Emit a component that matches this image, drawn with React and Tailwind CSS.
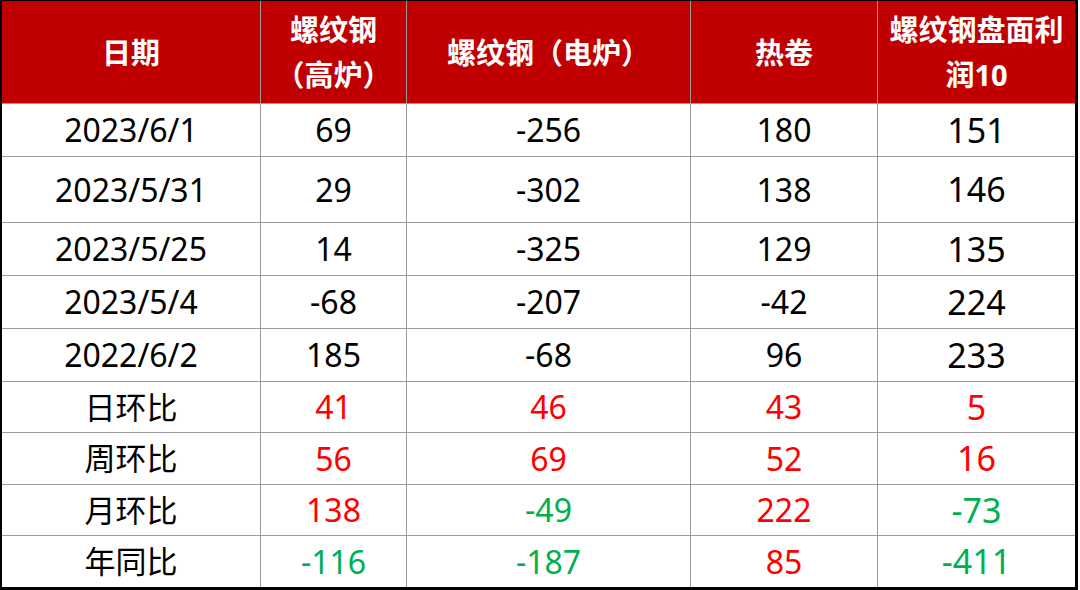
import React from 'react';

const headers = [
  ['日期'],
  ['螺纹钢', '（高炉）'],
  ['螺纹钢（电炉）'],
  ['热卷'],
  ['螺纹钢盘面利', '润10'],
];

// value colour: k = black, r = red, g = green
const rows = [
  ['2023/6/1', ['69', 'k'], ['-256', 'k'], ['180', 'k'], ['151', 'k']],
  ['2023/5/31', ['29', 'k'], ['-302', 'k'], ['138', 'k'], ['146', 'k']],
  ['2023/5/25', ['14', 'k'], ['-325', 'k'], ['129', 'k'], ['135', 'k']],
  ['2023/5/4', ['-68', 'k'], ['-207', 'k'], ['-42', 'k'], ['224', 'k']],
  ['2022/6/2', ['185', 'k'], ['-68', 'k'], ['96', 'k'], ['233', 'k']],
  ['日环比', ['41', 'r'], ['46', 'r'], ['43', 'r'], ['5', 'r']],
  ['周环比', ['56', 'r'], ['69', 'r'], ['52', 'r'], ['16', 'r']],
  ['月环比', ['138', 'r'], ['-49', 'g'], ['222', 'r'], ['-73', 'g']],
  ['年同比', ['-116', 'g'], ['-187', 'g'], ['85', 'r'], ['-411', 'g']],
];

const colors = {
  k: 'text-black',
  r: 'text-[#ff0000]',
  g: 'text-[#00b050]',
};

const font = { fontFamily: '"Noto Sans", "Noto Sans CJK SC", sans-serif' };

const App = () => {
  return (
    <div className="w-[1080px] h-[590px] bg-white" style={font}>
      <div
        className="w-[1078px] h-[590px] border-l-2 border-t border-r-[3px] border-b-[3px] border-black
          grid grid-cols-[259px_146px_284px_187px_197px]
          grid-rows-[103px_53px_66px_53px_53px_53px_51px_52px_51px_51px]"
      >
        {/* Header */}
        {headers.map((lines, i) => (
          <div
            key={i}
            className={`bg-[#c00000] text-white font-bold text-[29px] leading-[45px] flex flex-col items-center justify-center
              border-b border-[#9a9a9a] ${i < 4 ? 'border-r' : ''}`}
          >
            {lines.map((l, j) => (
              <span key={j}>{l}</span>
            ))}
          </div>
        ))}

        {/* Body */}
        {rows.map((row, r) =>
          row.map((cell, c) => {
            const text = c === 0 ? cell : cell[0];
            const color = c === 0 ? 'text-black' : colors[cell[1]];
            let size = 'text-[32px]';
            if (c === 4) size = 'text-[34px]';
            if (c === 0 && r >= 5) size = 'text-[31px]';
            return (
              <div
                key={`${r}-${c}`}
                className={`flex items-center justify-center ${color} ${size}
                  ${c < 4 ? 'border-r' : ''} ${r < rows.length - 1 ? 'border-b' : ''} border-[#9a9a9a]`}
              >
                {text}
              </div>
            );
          })
        )}
      </div>
    </div>
  );
};

export default App;
